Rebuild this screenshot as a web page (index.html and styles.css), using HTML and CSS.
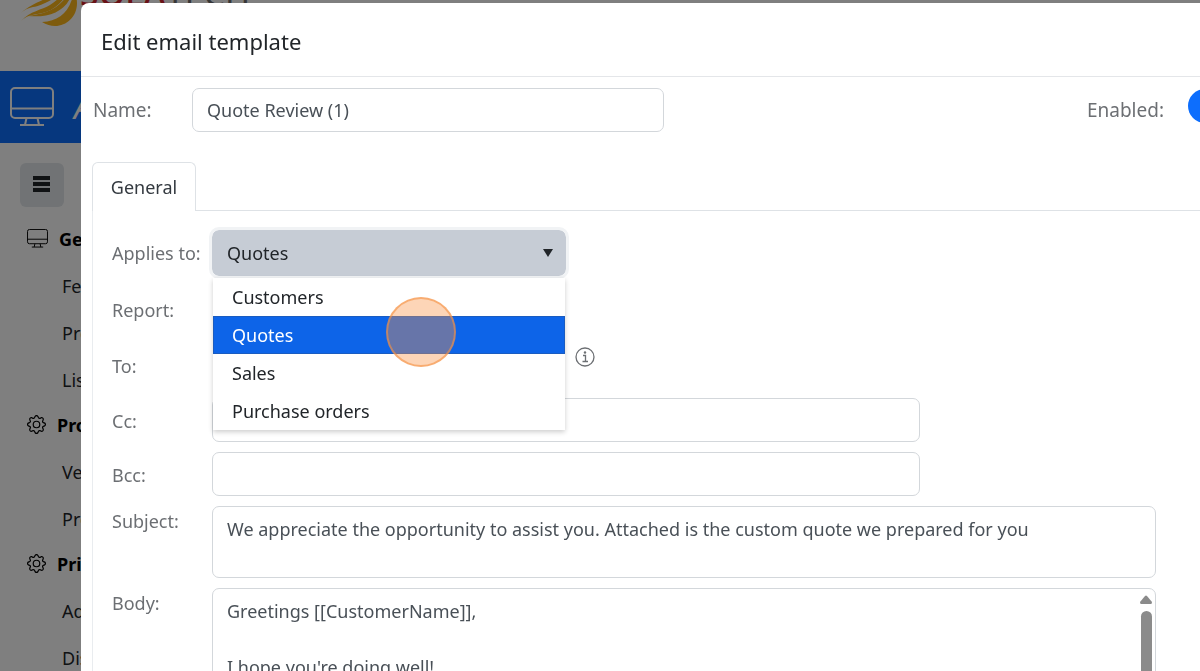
FILE: index.html
```html
<!DOCTYPE html>
<html lang="en">
<head>
<meta charset="utf-8">
<title>Edit email template</title>
<link rel="stylesheet" href="styles.css">
</head>
<body>
<svg class="defs" aria-hidden="true">
  <symbol id="display" viewBox="0 0 44 40" fill="none" stroke="currentColor" stroke-width="2"><rect x="1" y="1" width="42" height="30" rx="4"/><path d="M1 21.500H43M16.500 31L15 38M27.500 31L29 38M10 38H34"/></symbol>
  <symbol id="gear" viewBox="0 0 16 16" fill="currentColor"><path d="M8 4.754a3.246 3.246 0 1 0 0 6.492 3.246 3.246 0 0 0 0-6.492zM5.754 8a2.246 2.246 0 1 1 4.492 0 2.246 2.246 0 0 1-4.492 0z"/><path d="M9.796 1.343c-.527-1.790-3.065-1.790-3.592 0l-.094.319a.873.873 0 0 1-1.255.520l-.292-.160c-1.640-.892-3.433.902-2.540 2.541l.159.292a.873.873 0 0 1-.520 1.255l-.319.094c-1.790.527-1.790 3.065 0 3.592l.319.094a.873.873 0 0 1 .520 1.255l-.160.292c-.892 1.640.901 3.434 2.541 2.540l.292-.159a.873.873 0 0 1 1.255.520l.094.319c.527 1.790 3.065 1.790 3.592 0l.094-.319a.873.873 0 0 1 1.255-.520l.292.160c1.640.893 3.434-.902 2.540-2.541l-.159-.292a.873.873 0 0 1 .520-1.255l.319-.094c1.790-.527 1.790-3.065 0-3.592l-.319-.094a.873.873 0 0 1-.520-1.255l.160-.292c.893-1.640-.902-3.433-2.541-2.540l-.292.159a.873.873 0 0 1-1.255-.520l-.094-.319zm-2.633.283c.246-.835 1.428-.835 1.674 0l.094.319a1.873 1.873 0 0 0 2.693 1.115l.291-.160c.764-.415 1.600.420 1.184 1.185l-.159.292a1.873 1.873 0 0 0 1.116 2.692l.318.094c.835.246.835 1.428 0 1.674l-.319.094a1.873 1.873 0 0 0-1.115 2.693l.160.291c.415.764-.420 1.600-1.185 1.184l-.291-.159a1.873 1.873 0 0 0-2.693 1.116l-.094.318c-.246.835-1.428.835-1.674 0l-.094-.319a1.873 1.873 0 0 0-2.692-1.115l-.292.160c-.764.415-1.600-.420-1.184-1.185l.159-.291A1.873 1.873 0 0 0 1.945 8.930l-.319-.094c-.835-.246-.835-1.428 0-1.674l.319-.094A1.873 1.873 0 0 0 3.060 4.377l-.160-.292c-.415-.764.420-1.600 1.185-1.184l.292.159a1.873 1.873 0 0 0 2.692-1.115l.094-.319z"/></symbol>
</svg>
<div class="page">
  <header class="brand">
    <svg class="brand-mark" viewBox="0 0 60 30" fill="#fdb71a"><path d="M1 13C10 5 18 2 32-4H38C26 3 20 6 13 7C8 8 4 10 1 13Z"/><path d="M1 21C10 11 22 10 30 5C36 1 38-1 41-4H46C40 4 34 9 26 12C16 15 8 14 1 21Z"/><path d="M8 16C22 14 36 11 47-4H51C45 12 28 18 8 16Z"/><path d="M22 22C38 21 48 14 53-4H56C62 18 40 34 22 22Z"/></svg>
    <span class="brand-name"><b>SOLA</b>TECH</span>
  </header>
  <div class="banner"><svg class="banner-icon"><use href="#display"/></svg><h1>Administration</h1></div>
  <nav class="side">
    <button class="burger" aria-label="Toggle menu"><span></span><span></span><span></span></button>
    <h2><svg class="display-icon"><use href="#display"/></svg>General</h2>
    <a href="#">Features</a><a href="#">Preferences</a><a href="#">Lists</a>
    <h2 class="gear-title"><svg><use href="#gear"/></svg>Products</h2>
    <a href="#">Vendors</a><a href="#">Products</a>
    <h2 class="gear-title"><svg><use href="#gear"/></svg>Pricing</h2>
    <a href="#">Add-ons</a><a href="#">Discounts</a>
  </nav>
</div>
<div class="backdrop"></div>
<main class="modal" role="dialog" aria-labelledby="title">
  <header class="modal-head"><h2 id="title">Edit email template</h2></header>
  <div class="top-row">
    <label for="name">Name:</label>
    <input class="field name" id="name" value="Quote Review (1)">
    <label class="enabled" for="enabled">Enabled:</label>
    <input class="switch" type="checkbox" role="switch" id="enabled" checked>
  </div>
  <div class="tabs"><button class="tab" role="tab" aria-selected="true">General</button></div>
  <section class="pane">
    <div class="row applies">
      <label for="applies">Applies to:</label>
      <div class="dropdown">
        <select id="applies"><option>Customers</option><option selected>Quotes</option><option>Sales</option><option>Purchase orders</option></select>
        <svg class="caret" viewBox="0 0 10 8"><path d="M0 0H10L5 8Z"/></svg>
        <ul class="menu" role="listbox" aria-label="Applies to">
          <li role="option">Customers</li><li class="active" role="option" aria-selected="true">Quotes</li><li role="option">Sales</li><li role="option">Purchase orders</li>
        </ul>
        <span class="click-mark"></span>
      </div>
    </div>
    <div class="row report"><span>Report:</span></div>
    <div class="row"><span>To:</span>
      <div class="to-field"><button class="info" aria-label="Recipient information"><svg viewBox="0 0 20 20" fill="none" stroke="currentColor"><circle cx="10" cy="10" r="9" stroke-width="1.300"/><path d="M8 8.500H10.500V14M7.500 14.500H13" stroke-width="1.300"/><circle cx="10" cy="5.500" r="1.200" fill="currentColor" stroke="none"/></svg></button></div>
    </div>
    <div class="row copy"><label for="cc">Cc:</label><input class="field mail" id="cc"></div>
    <div class="row copy"><label for="bcc">Bcc:</label><input class="field mail" id="bcc"></div>
    <div class="row tall"><label for="subject">Subject:</label><textarea class="field subject" id="subject">We appreciate the opportunity to assist you. Attached is the custom quote we prepared for you</textarea></div>
    <div class="row tall"><label for="body">Body:</label>
      <div class="field editor"><textarea id="body">Greetings [[CustomerName]],

I hope you're doing well!</textarea>
        <div class="scroll" aria-hidden="true"><svg viewBox="0 0 12 9"><path d="M5 1Q6 0 7 1L12 7Q12 9 11 9H1Q0 9 0 7Z"/></svg><span></span></div>
      </div>
    </div>
  </section>
</main>
</body>
</html>
```
FILE: styles.css
```css
* { box-sizing: border-box; }
body { margin: 0; height: 100vh; overflow: hidden; font: 18px/28px "Segoe UI", "Noto Sans", "Open Sans", sans-serif; color: #212529; background: #fff; }
h1, h2, ul { margin: 0; padding: 0; font-weight: 400; }
button, input, select, textarea { font: inherit; color: inherit; margin: 0; }
.defs { position: absolute; width: 0; height: 0; }

.page { height: 100vh; overflow: hidden; }
.brand { height: 71px; display: flex; align-items: flex-start; padding-left: 20px; overflow: hidden; }
.brand-mark { width: 60px; height: 30px; }
.brand-name { font-size: 34px; line-height: 12px; color: #6c6c6c; margin-top: -13px; }
.brand-name b { color: #d3232d; font-weight: 500; }
.banner { height: 72px; display: flex; align-items: center; gap: 20px; padding: 0 10px; background: #0d6efd; color: #fff; }
.banner-icon { flex: none; width: 44px; height: 40px; }
.banner h1 { font-size: 32px; font-style: italic; }
.banner, .side { overflow: hidden; width: 82px; white-space: nowrap; }
.side { display: flex; flex-direction: column; padding: 20px 0 0 20px; }
.burger { width: 44px; height: 44px; border: 0; border-radius: 6px; background: #e2e6ea; display: flex; flex-direction: column; gap: 2px; align-items: center; justify-content: center; margin-bottom: 8px; padding: 0 2px 2px 0; }
.burger span { width: 17px; height: 4px; background: #212529; }
.side h2 { flex: none; height: 47px; display: flex; align-items: center; gap: 11px; padding-left: 7px; font-size: 18px; font-weight: 700; color: #000; }
.side .gear-title { height: 45px; padding-bottom: 2px; }
.side h2 svg { flex: none; width: 19px; height: 19px; }
.side h2 .display-icon { width: 21px; height: 19px; }
.side a { flex: none; height: 47px; padding: 10px 0 0 42px; color: #212529; text-decoration: none; }
.backdrop { position: fixed; inset: 0; background: rgba(0, 0, 0, .5); }

.modal { position: fixed; top: 3px; left: 81px; right: -60px; bottom: -60px; overflow: hidden; background: #fff; border-radius: 8px 8px 0 0; color: #6c6f73; }
.modal-head { height: 74px; padding: 2px 20px 0; display: flex; align-items: center; border-bottom: 1px solid #e4e6e9; color: #212529; }
.modal-head h2 { font-size: 22px; line-height: 32px; }
.top-row { display: flex; align-items: center; padding: 11px 12px 0; }
.top-row label { font-size: 19px; }
.top-row label:first-child { width: 99px; }
.field { border: 1px solid #d3d7db; border-radius: 7px; background: #fff; padding: 8px 14px; height: 44px; outline: 0; color: #495057; resize: none; }
.name { width: 472px; }
.enabled { margin-left: auto; padding-right: 24px; }
.switch { appearance: none; width: 60px; height: 34px; border-radius: 17px; background: #0d6efd; margin: -8px 0 0; }
.tabs { display: flex; margin: 30px 0 0 11px; border-bottom: 1px solid #dee2e6; }
.tab { height: 49px; width: 104px; margin-bottom: -1px; padding: 0; border: 1px solid #dee2e6; border-bottom: 0; border-radius: 6px 6px 0 0; background: #fff; color: #343a40; }
.pane { display: flex; flex-direction: column; gap: 10px; margin-left: 11px; padding: 19px 104px 0 19px; border-left: 1px solid #e9ecef; }
.row { display: grid; grid-template-columns: 100px 1fr; align-items: center; min-height: 44px; }
.applies { min-height: 46px; }
.report { min-height: 48px; }
.copy label { padding-top: 2px; }
.tall { align-items: start; }
.tall label { padding-top: 1px; }
.dropdown { position: relative; width: 354px; }
select { display: block; appearance: none; width: 100%; height: 46px; padding: 0 15px; border: 0; border-radius: 7px; background: #c6ccd5; color: #212529; outline: 3px solid #f1f3f5; }
.caret { position: absolute; right: 13px; top: 19px; width: 10px; height: 8px; fill: #212529; }
.menu { position: absolute; z-index: 1; top: 48px; left: 1px; right: 1px; list-style: none; background: #fff; box-shadow: 0 2px 5px rgba(0, 0, 0, .2); color: #212529; }
.menu li { height: 38px; padding: 5px 19px; }
.menu .active { background: #0d64e8; color: #fff; border: 1px solid #1a5cc0; padding: 4px 18px; }
.click-mark { position: absolute; z-index: 2; left: 174px; top: 67px; width: 70px; height: 70px; border: 2px solid rgba(245, 145, 66, .6); border-radius: 50%; background: rgba(250, 145, 66, .38); }
.to-field { display: flex; padding: 0 0 18px 363px; }
.info { width: 20px; height: 20px; padding: 0; border: 0; background: none; color: #6c6f73; display: flex; }
.mail { width: 75%; }
.subject { width: 100%; height: 72px; overflow: hidden; }
.editor { display: flex; height: 200px; padding: 0; }
.editor textarea { flex: 1; border: 0; background: none; resize: none; padding: 8px 14px; outline: 0; overflow: hidden; }
.scroll { width: 18px; padding: 6px 3px 0; display: flex; flex-direction: column; gap: 7px; align-items: center; }
.scroll svg { width: 12px; height: 9px; fill: #8b8b8b; }
.scroll span { flex: 1; width: 11px; border-radius: 6px; background: #8b8b8b; }
```
